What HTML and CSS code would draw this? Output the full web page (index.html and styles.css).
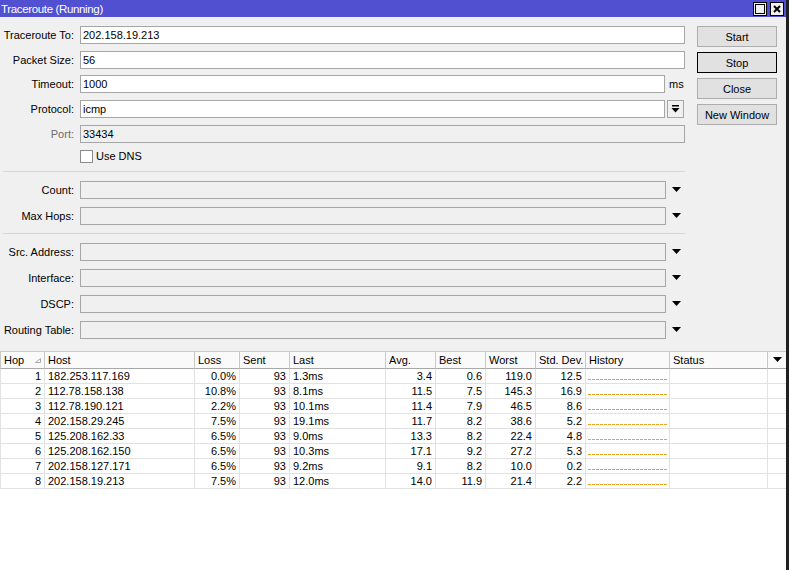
FILE: index.html
```html
<!DOCTYPE html>
<html>
<head>
<meta charset="utf-8">
<link rel="stylesheet" href="styles.css">
</head>
<body>
<div class="win">
  <div class="title">
    <span class="title-text">Traceroute (Running)</span>
    <div class="tbtns">
      <span class="tb"><i class="maxbox"></i></span>
      <span class="tb"><svg width="8" height="8" viewBox="0 0 8 8"><path d="M1 1 L7 7 M7 1 L1 7" stroke="#000" stroke-width="2"/></svg></span>
    </div>
  </div>
  <div class="form">
    <div class="top">
      <div class="fields">
        <div class="row"><label class="lbl">Traceroute To:</label><div class="inp">202.158.19.213</div></div>
        <div class="row"><label class="lbl">Packet Size:</label><div class="inp">56</div></div>
        <div class="row"><label class="lbl">Timeout:</label><div class="inp short">1000</div><span class="unit">ms</span></div>
        <div class="row"><label class="lbl">Protocol:</label><div class="inp short">icmp</div>
          <span class="dbtn"><svg width="9" height="8" viewBox="0 0 9 8"><rect x="1" y="0" width="7" height="1.5" fill="#000"/><path d="M0.5 3 H8.5 L4.5 7.5 Z" fill="#000"/></svg></span>
        </div>
        <div class="row"><label class="lbl dis">Port:</label><div class="inp dis">33434</div></div>
        <div class="row chk-row"><span class="chk"></span><span class="chk-text">Use DNS</span></div>
      </div>
      <div class="buttons">
        <div class="btn">Start</div>
        <div class="btn def">Stop</div>
        <div class="btn">Close</div>
        <div class="btn">New Window</div>
      </div>
    </div>
    <div class="sep"></div>
    <div class="group">
      <div class="row"><label class="lbl">Count:</label><div class="inp dd dis"></div><span class="arrow"><svg width="9" height="5" viewBox="0 0 9 5"><path d="M0 0 H9 L4.5 5 Z" fill="#000"/></svg></span></div>
      <div class="row"><label class="lbl">Max Hops:</label><div class="inp dd dis"></div><span class="arrow"><svg width="9" height="5" viewBox="0 0 9 5"><path d="M0 0 H9 L4.5 5 Z" fill="#000"/></svg></span></div>
    </div>
    <div class="sep"></div>
    <div class="group">
      <div class="row"><label class="lbl">Src. Address:</label><div class="inp dd dis"></div><span class="arrow"><svg width="9" height="5" viewBox="0 0 9 5"><path d="M0 0 H9 L4.5 5 Z" fill="#000"/></svg></span></div>
      <div class="row"><label class="lbl">Interface:</label><div class="inp dd dis"></div><span class="arrow"><svg width="9" height="5" viewBox="0 0 9 5"><path d="M0 0 H9 L4.5 5 Z" fill="#000"/></svg></span></div>
      <div class="row"><label class="lbl">DSCP:</label><div class="inp dd dis"></div><span class="arrow"><svg width="9" height="5" viewBox="0 0 9 5"><path d="M0 0 H9 L4.5 5 Z" fill="#000"/></svg></span></div>
      <div class="row"><label class="lbl">Routing Table:</label><div class="inp dd dis"></div><span class="arrow"><svg width="9" height="5" viewBox="0 0 9 5"><path d="M0 0 H9 L4.5 5 Z" fill="#000"/></svg></span></div>
    </div>
  </div>
  <div class="grid-wrap">
    <div class="grid">
      <div class="h">Hop<svg class="sort" width="6" height="5" viewBox="0 0 6 5"><path d="M5.5 0.5 V4.5 H0.5 Z" fill="none" stroke="#a8a8a8" stroke-width="1"/></svg></div>
      <div class="h">Host</div><div class="h">Loss</div><div class="h">Sent</div><div class="h">Last</div><div class="h">Avg.</div><div class="h">Best</div><div class="h">Worst</div><div class="h">Std. Dev.</div><div class="h">History</div><div class="h">Status</div>
      <div class="h hdd"><svg width="9" height="5" viewBox="0 0 9 5"><path d="M0 0 H9 L4.5 5 Z" fill="#000"/></svg></div>

      <div class="c r">1</div><div class="c">182.253.117.169</div><div class="c r">0.0%</div><div class="c r">93</div><div class="c">1.3ms</div><div class="c r">3.4</div><div class="c r">0.6</div><div class="c r">119.0</div><div class="c r">12.5</div><div class="c hist"><i></i></div><div class="c"></div><div class="c"></div>
      <div class="c r">2</div><div class="c">112.78.158.138</div><div class="c r">10.8%</div><div class="c r">93</div><div class="c">8.1ms</div><div class="c r">11.5</div><div class="c r">7.5</div><div class="c r">145.3</div><div class="c r">16.9</div><div class="c hist"><i></i></div><div class="c"></div><div class="c"></div>
      <div class="c r">3</div><div class="c">112.78.190.121</div><div class="c r">2.2%</div><div class="c r">93</div><div class="c">10.1ms</div><div class="c r">11.4</div><div class="c r">7.9</div><div class="c r">46.5</div><div class="c r">8.6</div><div class="c hist"><i></i></div><div class="c"></div><div class="c"></div>
      <div class="c r">4</div><div class="c">202.158.29.245</div><div class="c r">7.5%</div><div class="c r">93</div><div class="c">19.1ms</div><div class="c r">11.7</div><div class="c r">8.2</div><div class="c r">38.6</div><div class="c r">5.2</div><div class="c hist"><i></i></div><div class="c"></div><div class="c"></div>
      <div class="c r">5</div><div class="c">125.208.162.33</div><div class="c r">6.5%</div><div class="c r">93</div><div class="c">9.0ms</div><div class="c r">13.3</div><div class="c r">8.2</div><div class="c r">22.4</div><div class="c r">4.8</div><div class="c hist"><i></i></div><div class="c"></div><div class="c"></div>
      <div class="c r">6</div><div class="c">125.208.162.150</div><div class="c r">6.5%</div><div class="c r">93</div><div class="c">10.3ms</div><div class="c r">17.1</div><div class="c r">9.2</div><div class="c r">27.2</div><div class="c r">5.3</div><div class="c hist"><i></i></div><div class="c"></div><div class="c"></div>
      <div class="c r">7</div><div class="c">202.158.127.171</div><div class="c r">6.5%</div><div class="c r">93</div><div class="c">9.2ms</div><div class="c r">9.1</div><div class="c r">8.2</div><div class="c r">10.0</div><div class="c r">0.2</div><div class="c hist"><i></i></div><div class="c"></div><div class="c"></div>
      <div class="c r">8</div><div class="c">202.158.19.213</div><div class="c r">7.5%</div><div class="c r">93</div><div class="c">12.0ms</div><div class="c r">14.0</div><div class="c r">11.9</div><div class="c r">21.4</div><div class="c r">2.2</div><div class="c hist"><i></i></div><div class="c"></div><div class="c"></div>
    </div>
  </div>
</div>
</body>
</html>
```

FILE: styles.css
```css
* { box-sizing: border-box; }
html, body { margin: 0; padding: 0; }
body {
  width: 789px;
  height: 570px;
  overflow: hidden;
  background: #202020;
  font-family: "Liberation Sans", Arial, sans-serif;
  font-size: 11px;
  color: #000;
}
.win {
  width: 786px;
  height: 570px;
  background: #f0f0f0;
  display: flex;
  flex-direction: column;
}
.title {
  height: 17px;
  flex: none;
  background: #5050d0;
  color: #fff;
  display: flex;
  align-items: center;
  justify-content: space-between;
  padding-left: 1px;
}
.title-text { font-size: 11.5px; letter-spacing: -0.35px; }
.tbtns { display: flex; gap: 3px; margin-right: 2px; }
.tb {
  width: 14px;
  height: 14px;
  background: #f0f0f0;
  border: 1px solid #000;
  display: flex;
  align-items: center;
  justify-content: center;
}
.maxbox { display: block; width: 10px; height: 10px; border: 1px solid #000; }

.form { padding-top: 9px; flex: none; }
.top { display: flex; }
.fields { width: 685px; display: flex; flex-direction: column; gap: 6.7px; }
.row { display: flex; align-items: center; height: 18px; }
.lbl {
  width: 74px;
  text-align: right;
  margin-right: 6px;
  white-space: nowrap;
}
.lbl.dis { color: #6d6d6d; }
.inp {
  flex: 1;
  height: 18px;
  background: #fff;
  border: 1px solid #a6a6a6;
  padding-left: 2px;
  line-height: 16px;
  white-space: nowrap;
}
.inp.short { flex: none; width: 585px; }
.inp.dd { flex: none; width: 586px; }
.inp.dis { background: #f0f0f0; }
.unit { margin-left: 4px; }
.dbtn {
  width: 17px;
  height: 18px;
  margin-left: 2px;
  border: 1px solid #a6a6a6;
  background: #f0f0f0;
  display: flex;
  align-items: center;
  justify-content: center;
}
.chk-row { height: 13px; margin-top: 0.5px; }
.chk {
  width: 13px;
  height: 13px;
  margin-left: 80px;
  background: #fff;
  border: 1px solid #8c8c8c;
}
.chk-text { margin-left: 3px; }
.arrow { margin-left: 6px; display: flex; align-items: center; }
.buttons {
  margin-left: 12px;
  width: 80px;
  display: flex;
  flex-direction: column;
  gap: 5px;
}
.btn {
  height: 21px;
  border: 1px solid #adadad;
  background: #e1e1e1;
  display: flex;
  align-items: center;
  justify-content: center;
}
.btn.def { border: 1px solid #000; }
.sep {
  width: 682px;
  margin-left: 3px;
  height: 1px;
  background: #d6d6d6;
  margin-top: 8px;
  margin-bottom: 9px;
}
.group { display: flex; flex-direction: column; gap: 8px; }

.grid-wrap {
  flex: 1;
  margin-top: 12px;
  background: #fff;
  border-top: 1px solid #c8c8c8;
}
.grid {
  display: grid;
  grid-template-columns: 45px 150px 45px 50px 96px 50px 50px 50px 50px 84px 98px 18px;
  grid-auto-rows: 15px;
  grid-template-rows: 17px;
}
.h {
  background: #fafafa;
  border-right: 1px solid #c8c8c8;
  border-bottom: 1px solid #a8a8a8;
  padding-left: 3px;
  line-height: 16px;
  white-space: nowrap;
  display: flex;
  align-items: center;
}
.h:first-child { border-left: 1px solid #c8c8c8; position: relative; }
.sort { position: absolute; left: 34px; top: 6px; }
.hdd { justify-content: center; padding-left: 0; border-right: none; }
.c {
  border-right: 1px solid #e2e2e2;
  border-bottom: 1px solid #e2e2e2;
  padding: 0 3px;
  line-height: 14px;
  white-space: nowrap;
  overflow: hidden;
}
.c:nth-child(12n+1) { border-left: 1px solid #e2e2e2; }
.c.r { text-align: right; }
.c:nth-child(12n) { border-right: none; }
.hist { position: relative; }
.hist i {
  position: absolute;
  left: 2px;
  right: 2px;
  bottom: 3px;
  height: 1px;
  background: repeating-linear-gradient(90deg, #f0a020 0 3px, transparent 3px 4px);
}
```
